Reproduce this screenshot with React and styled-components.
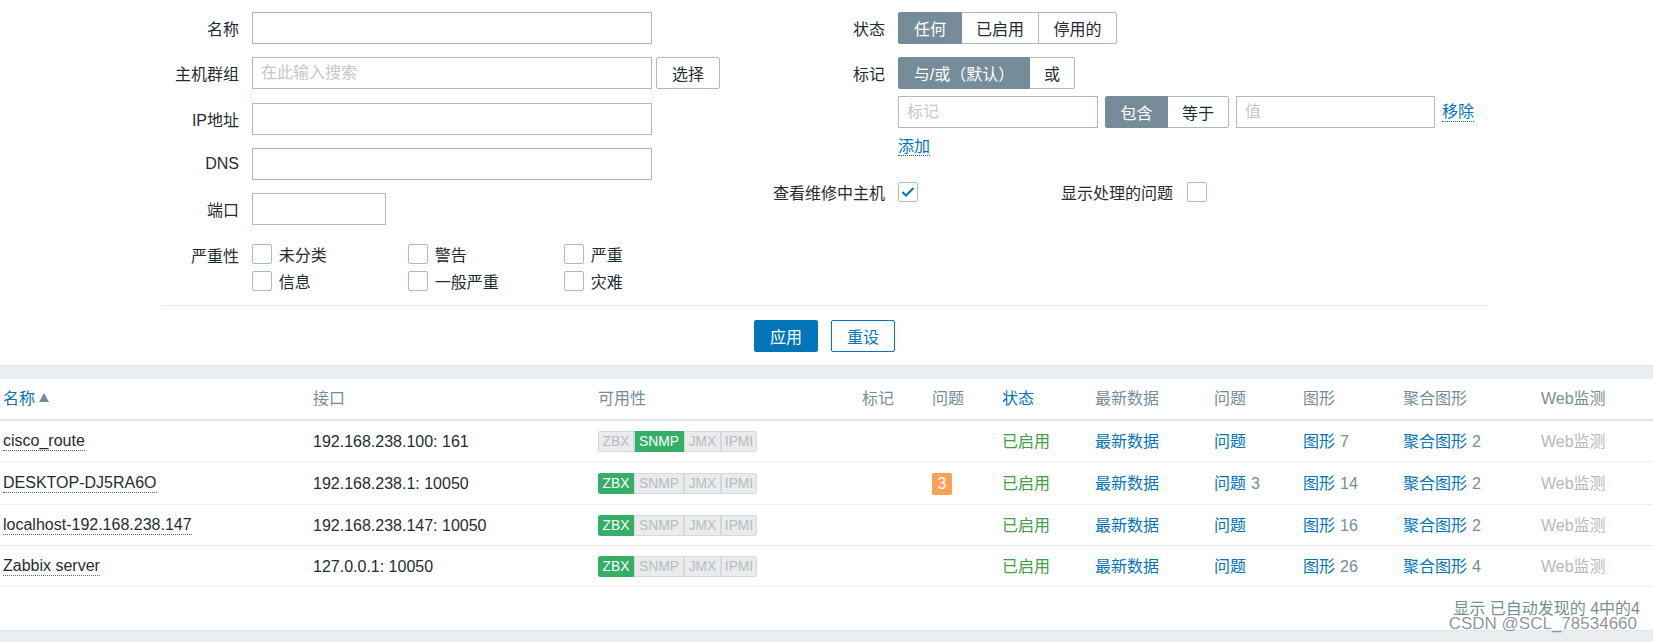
import React from 'react';
import styled, { createGlobalStyle } from 'styled-components';

const GlobalStyle = createGlobalStyle`
  html, body {
    margin: 0;
    padding: 0;
    background: #fff;
    overflow: hidden;
  }
  body {
    font-family: "Liberation Sans", Arial, "Noto Sans CJK SC", sans-serif;
    font-size: 16px;
    color: #1f2c33;
  }
  * { box-sizing: border-box; }
`;

const Page = styled.div`
  position: relative;
  width: 1653px;
  height: 642px;
  overflow: hidden;
  background: #fff;
`;

/* ---------- filter ---------- */

const Filter = styled.div`
  width: 1327px;
  margin-left: 161px;
  padding-top: 12px;
`;

const FilterColumns = styled.div`
  display: flex;
  align-items: flex-start;
`;

const FormGrid = styled.div`
  display: grid;
  grid-template-columns: ${(p) => p.$label}px auto;
  column-gap: 13px;
  row-gap: 13.33px;
  align-items: start;
  width: ${(p) => (p.$width ? `${p.$width}px` : 'auto')};
  flex: ${(p) => (p.$width ? 'none' : '1')};
`;

const Label = styled.div`
  height: 32px;
  display: flex;
  align-items: center;
  justify-content: flex-end;
  white-space: nowrap;
`;

const Control = styled.div`
  display: flex;
  align-items: center;
  gap: ${(p) => p.$gap || 0}px;
`;

const TextInput = styled.input`
  width: ${(p) => p.$w}px;
  height: 32px;
  border: 1px solid #acbbc2;
  border-radius: 0;
  padding: 0 8px;
  font: inherit;
  color: #1f2c33;
  background: #fff;
  outline: none;
  &::placeholder {
    color: #c3c8cb;
  }
`;

const GreyButton = styled.button`
  height: 32px;
  width: 64px;
  border: 1px solid #acbbc2;
  border-radius: 2px;
  background: #fff;
  color: #1f2c33;
  font: inherit;
  padding: 0;
`;

const SeverityGrid = styled.div`
  display: grid;
  grid-template-columns: 156px 156px 156px;
  grid-auto-rows: 27.33px;
  padding: 1.33px 0;
`;

const CheckItem = styled.div`
  display: flex;
  align-items: center;
  gap: 6.7px;
  white-space: nowrap;
`;

const Box = styled.span`
  width: 20px;
  height: 20px;
  flex: none;
  border: 1px solid #acbbc2;
  border-radius: 2px;
  background: #fff;
  display: inline-flex;
  align-items: center;
  justify-content: center;
`;

const Checkbox = ({ checked }) => (
  <Box>
    {checked && (
      <svg width="18" height="18" viewBox="0 0 18 18">
        <polyline
          points="3.5,9 7,12.5 14.5,5"
          fill="none"
          stroke="#0275b8"
          strokeWidth="2"
        />
      </svg>
    )}
  </Box>
);

const Segmented = styled.div`
  display: inline-flex;
  height: 32px;
`;

const Segment = styled.span`
  width: ${(p) => p.$w}px;
  height: 32px;
  display: inline-flex;
  align-items: center;
  justify-content: center;
  white-space: nowrap;
  border: 1px solid ${(p) => (p.$on ? '#768d99' : '#acbbc2')};
  background: ${(p) => (p.$on ? '#768d99' : '#fff')};
  color: ${(p) => (p.$on ? '#fff' : '#1f2c33')};
  & + & {
    border-left: none;
  }
  &:first-child {
    border-radius: 2px 0 0 2px;
  }
  &:last-child {
    border-radius: 0 2px 2px 0;
  }
`;

const TagsBlock = styled.div`
  display: flex;
  flex-direction: column;
  align-items: flex-start;
`;

const TagRow = styled.div`
  display: flex;
  align-items: center;
  gap: 7px;
  margin-top: 6.7px;
`;

const ActionLink = styled.span`
  color: #0275b8;
  border-bottom: 1px dotted #0275b8;
  line-height: 18px;
`;

const AddRow = styled.div`
  height: 34.7px;
  padding-top: 10px;
`;

const CheckRow = styled.div`
  height: 32px;
  display: flex;
  align-items: center;
`;

const InlineLabel = styled.span`
  width: 255px;
  text-align: right;
  margin-right: 14px;
  white-space: nowrap;
`;

const ButtonBar = styled.div`
  margin-top: 9px;
  border-top: 1px solid #ebeef0;
  padding: 14px 0 13px;
  display: flex;
  justify-content: center;
  gap: 13px;
`;

const Button = styled.button`
  height: 32px;
  width: 64px;
  padding: 0;
  border-radius: 2px;
  font: inherit;
  border: 1px solid #0275b8;
  background: ${(p) => (p.$primary ? '#0275b8' : '#fff')};
  color: ${(p) => (p.$primary ? '#fff' : '#0275b8')};
`;

const Band = styled.div`
  height: ${(p) => p.$h}px;
  background: #ebeef0;
  border-top: 1px solid #e3e7ea;
`;

/* ---------- table ---------- */

const columns = '310px 285px 264px 70px 70px 93px 119px 89px 100px 138px 1fr';

const HeadRow = styled.div`
  display: grid;
  grid-template-columns: ${columns};
  align-items: center;
  height: 42px;
  padding: 0 0 0 3px;
  border-bottom: 2px solid #dce1e4;
  color: #768d99;
  line-height: 21px;
  white-space: nowrap;
`;

const SortLink = styled.span`
  color: #0275b8;
`;

const SortArrow = styled.span`
  display: inline-block;
  margin-left: 4px;
  width: 0;
  height: 0;
  border-left: 5px solid transparent;
  border-right: 5px solid transparent;
  border-bottom: 9px solid #768d99;
  vertical-align: 2px;
`;

const Row = styled.div`
  display: grid;
  grid-template-columns: ${columns};
  align-items: center;
  padding: 10px 0 9px 3px;
  border-bottom: 1px solid #ebeef0;
  line-height: 21px;
  white-space: nowrap;
`;

const Cell = styled.div`
  min-height: 21px;
  display: flex;
  align-items: center;
`;

const HostLink = styled.span`
  color: #1f2c33;
  border-bottom: 1px dotted #5d6b73;
  line-height: 19px;
`;

const Link = styled.span`
  color: ${(p) => (p.$disabled ? '#b3babf' : '#0275b8')};
`;

const Count = styled.span`
  color: #768d99;
  margin-left: 5px;
`;

const Enabled = styled.span`
  color: #429e47;
`;

const Avail = styled.span`
  display: inline-flex;
  height: 21px;
  border-radius: 2px;
  overflow: hidden;
`;

const AvailItem = styled.span`
  width: ${(p) => p.$w}px;
  height: 21px;
  display: inline-flex;
  align-items: center;
  justify-content: center;
  font-size: 13.8px;
  border: 1px solid ${(p) => (p.$on ? '#34af67' : '#d3d9dc')};
  background: ${(p) => (p.$on ? '#34af67' : '#ebebeb')};
  color: ${(p) => (p.$on ? '#fff' : '#b2bec4')};
  & + & {
    border-left: ${(p) => (p.$on ? 'none' : '1px solid #d3d9dc')};
  }
  &:first-child {
    border-radius: 2px 0 0 2px;
  }
  &:last-child {
    border-radius: 0 2px 2px 0;
  }
`;

const ProblemBadge = styled.span`
  display: inline-flex;
  align-items: center;
  justify-content: center;
  width: 20px;
  height: 22px;
  margin: 1px 0 0;
  border-radius: 2px;
  background: #ffa059;
  color: #fff;
`;

const Footer = styled.div`
  height: 43px;
  display: flex;
  align-items: center;
  justify-content: flex-end;
  padding: 0 13px 2px 0;
  color: #768d99;
`;

const Watermark = styled.div`
  position: absolute;
  right: 16px;
  bottom: 8px;
  font-size: 17px;
  line-height: 20px;
  color: rgba(120, 120, 120, 0.8);
  text-shadow: 0 0 1px rgba(255, 255, 255, 0.8);
  pointer-events: none;
`;

const availWidths = { ZBX: 36, SNMP: 50, JMX: 37, IPMI: 36 };

const Availability = ({ on }) => (
  <Avail>
    {Object.keys(availWidths).map((k) => (
      <AvailItem key={k} $w={availWidths[k]} $on={k === on}>
        {k}
      </AvailItem>
    ))}
  </Avail>
);

const hosts = [
  { name: 'cisco_route', iface: '192.168.238.100: 161', avail: 'SNMP', problems: null, problemCount: null, graphs: 7, screens: 2 },
  { name: 'DESKTOP-DJ5RA6O', iface: '192.168.238.1: 10050', avail: 'ZBX', problems: 3, problemCount: 3, graphs: 14, screens: 2 },
  { name: 'localhost-192.168.238.147', iface: '192.168.238.147: 10050', avail: 'ZBX', problems: null, problemCount: null, graphs: 16, screens: 2 },
  { name: 'Zabbix server', iface: '127.0.0.1: 10050', avail: 'ZBX', problems: null, problemCount: null, graphs: 26, screens: 4 },
];

const severities = ['未分类', '警告', '严重', '信息', '一般严重', '灾难'];

const App = () => (
  <Page>
    <GlobalStyle />
    <Filter>
      <FilterColumns>
        <FormGrid $label={78} $width={600}>
          <Label>名称</Label>
          <Control>
            <TextInput $w={400} />
          </Control>

          <Label>主机群组</Label>
          <Control $gap={4}>
            <TextInput $w={400} placeholder="在此输入搜索" />
            <GreyButton>选择</GreyButton>
          </Control>

          <Label>IP地址</Label>
          <Control>
            <TextInput $w={400} />
          </Control>

          <Label>DNS</Label>
          <Control>
            <TextInput $w={400} />
          </Control>

          <Label>端口</Label>
          <Control>
            <TextInput $w={134} />
          </Control>

          <Label>严重性</Label>
          <SeverityGrid>
            {severities.map((s) => (
              <CheckItem key={s}>
                <Checkbox />
                {s}
              </CheckItem>
            ))}
          </SeverityGrid>
        </FormGrid>

        <FormGrid $label={124}>
          <Label>状态</Label>
          <Control>
            <Segmented>
              <Segment $w={64} $on>任何</Segment>
              <Segment $w={77}>已启用</Segment>
              <Segment $w={78}>停用的</Segment>
            </Segmented>
          </Control>

          <Label>标记</Label>
          <TagsBlock>
            <Segmented>
              <Segment $w={132} $on>与/或（默认）</Segment>
              <Segment $w={45}>或</Segment>
            </Segmented>
            <TagRow>
              <TextInput $w={200} placeholder="标记" />
              <Segmented>
                <Segment $w={63} $on>包含</Segment>
                <Segment $w={61}>等于</Segment>
              </Segmented>
              <TextInput $w={199} placeholder="值" />
              <ActionLink>移除</ActionLink>
            </TagRow>
            <AddRow>
              <ActionLink>添加</ActionLink>
            </AddRow>
          </TagsBlock>

          <Label>查看维修中主机</Label>
          <CheckRow>
            <Checkbox checked />
            <InlineLabel>显示处理的问题</InlineLabel>
            <Checkbox />
          </CheckRow>
        </FormGrid>
      </FilterColumns>

      <ButtonBar>
        <Button $primary>应用</Button>
        <Button>重设</Button>
      </ButtonBar>
    </Filter>

    <Band $h={14} />

    <HeadRow>
      <div>
        <SortLink>名称</SortLink>
        <SortArrow />
      </div>
      <div>接口</div>
      <div>可用性</div>
      <div>标记</div>
      <div>问题</div>
      <SortLink>状态</SortLink>
      <div>最新数据</div>
      <div>问题</div>
      <div>图形</div>
      <div>聚合图形</div>
      <div>Web监测</div>
    </HeadRow>

    {hosts.map((h) => (
      <Row key={h.name}>
        <Cell>
          <HostLink>{h.name}</HostLink>
        </Cell>
        <Cell>{h.iface}</Cell>
        <Cell>
          <Availability on={h.avail} />
        </Cell>
        <Cell />
        <Cell>{h.problems && <ProblemBadge>{h.problems}</ProblemBadge>}</Cell>
        <Cell>
          <Enabled>已启用</Enabled>
        </Cell>
        <Cell>
          <Link>最新数据</Link>
        </Cell>
        <Cell>
          <Link>问题</Link>
          {h.problemCount && <Count>{h.problemCount}</Count>}
        </Cell>
        <Cell>
          <Link>图形</Link>
          <Count>{h.graphs}</Count>
        </Cell>
        <Cell>
          <Link>聚合图形</Link>
          <Count>{h.screens}</Count>
        </Cell>
        <Cell>
          <Link $disabled>Web监测</Link>
        </Cell>
      </Row>
    ))}

    <Footer>显示 已自动发现的 4中的4</Footer>
    <Band $h={13} />

    <Watermark>CSDN @SCL_78534660</Watermark>
  </Page>
);

export default App;
